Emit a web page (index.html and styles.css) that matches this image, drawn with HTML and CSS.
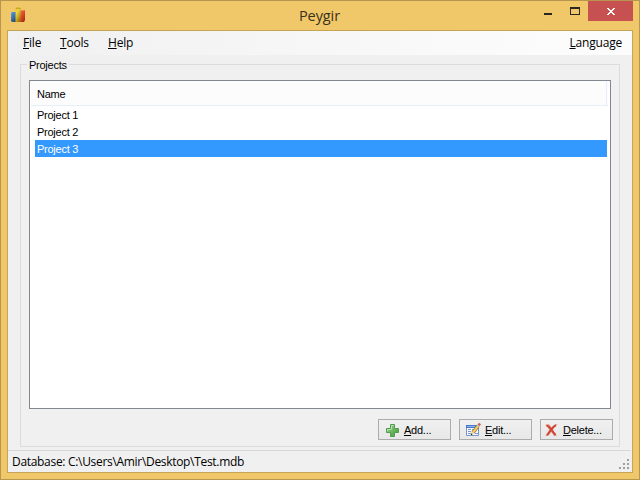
FILE: index.html
```html
<!DOCTYPE html>
<html lang="en">
<head>
<meta charset="utf-8">
<title>Peygir</title>
<link rel="stylesheet" href="styles.css">
</head>
<body>
<div class="window">
  <header class="titlebar">
    <svg class="app-icon" width="16" height="16" viewBox="0 0 16 16">
      <defs>
        <linearGradient id="blue" x1="0" y1="0" x2=".6" y2="1"><stop offset="0" stop-color="#5b9edb"/><stop offset=".4" stop-color="#4482bd"/><stop offset="1" stop-color="#254d7c"/></linearGradient>
        <linearGradient id="gold" x1="0" y1="0" x2=".7" y2="1"><stop offset="0" stop-color="#e0c02a"/><stop offset=".35" stop-color="#efd640"/><stop offset="1" stop-color="#a17100"/></linearGradient>
        <linearGradient id="red" x1="0" y1="0" x2=".7" y2="1"><stop offset="0" stop-color="#ee704d"/><stop offset=".5" stop-color="#df4a2e"/><stop offset="1" stop-color="#a92818"/></linearGradient>
      </defs>
      <path fill="url(#blue)" d="M1 6l1-1h4v10H2l-1-1z"/>
      <path fill="url(#red)" d="M10 4l1-1h4v10l-1 2h-4z"/>
      <path fill="#f08060" d="M10 4l1-1h4l-1 1z"/>
      <path fill="url(#gold)" d="M5.500 1.500l1-1H10l.8 1V14l-1 1H5.500z"/>
      <path fill="#c9a725" d="M5.500 1.500l1-1H10l.8 1-.8.500H6z"/>
    </svg>
    <h1 class="title">Peygir</h1>
    <div class="controls">
      <svg class="minimize" width="8" height="8"><path fill="#2b2620" d="M0 0h8v2H0z"/></svg>
      <svg class="maximize" width="10" height="8" shape-rendering="crispEdges"><path fill="#2b2620" fill-rule="evenodd" d="M0 0h10v8H0zM1 2h8v5H1z"/></svg>
      <div class="close"><svg width="8" height="7" shape-rendering="crispEdges"><path fill="#fff" d="M0 0h2v1h1v1h2V1h1V0h2v1H7v1H6v1H5v1h1v1h1v1h1v1H6V6H5V5H3v1H2v1H0V6h1V5h1V4h1V3H2V2H1V1H0z"/></svg></div>
    </div>
  </header>
  <main class="client">
    <nav class="menu">
      <span class="file"><u>F</u>ile</span>
      <span class="tools"><u>T</u>ools</span>
      <span class="help"><u>H</u>elp</span>
      <span class="language"><u>L</u>anguage</span>
    </nav>
    <section class="group">
      <h2 class="legend"><span>Projects</span></h2>
      <div class="list">
        <div class="list-head">Name</div>
        <div class="row">Project 1</div>
        <div class="row">Project 2</div>
        <div class="row selected">Project 3</div>
      </div>
      <div class="buttons">
        <div class="button">
          <svg width="16" height="16" viewBox="0 0 16 16"><defs><linearGradient id="green" x1="0" y1="0" x2="1" y2="1"><stop offset="0" stop-color="#9bd68b"/><stop offset="1" stop-color="#3f9a37"/></linearGradient></defs><path fill="url(#green)" stroke="#559a50" d="M6.500 2.500h4v4h4v4h-4v4h-4v-4h-4v-4h4z"/><path fill="none" stroke="#b4e2a6" d="M7.500 7V3.500h2M3.500 9.500v-2h4"/></svg>
          <span><u>A</u>dd...</span>
        </div>
        <div class="button">
          <svg width="16" height="16" viewBox="0 0 16 16"><path fill="#f4f8ff" stroke="#7894c8" d="M1.500 3.500h12v10h-12z"/><path fill="#4478d0" d="M1 3h12v3H1z"/><path fill="#98b4e4" d="M2 4h8v1H2z"/><path stroke="#7d9bd1" d="M3 7.500h3M7 7.500h2M3 9.500h3M3 11.500h3M10 11.500h3"/><path stroke="#936321" stroke-width="3.600" d="M8 10.500l5-6.500"/><path stroke="#f3cf62" stroke-width="2.200" d="M8 10.500l5-6.500"/><path fill="#efd8aa" d="M6.500 9.400L9.500 11.700 6 13z"/><path fill="#222" d="M6.400 11.300l1.100 1.100L5.700 13.300z"/><path fill="#d65d50" d="M12.500 2.500L14 .8l2 1.400-1.400 2z"/><path fill="#b9bcc4" d="M11.700 3.500l.8-1L14.700 4l-.8 1.200z"/></svg>
          <span><u>E</u>dit...</span>
        </div>
        <div class="button delete">
          <svg width="16" height="16" viewBox="0 0 16 16"><path fill="#e9a092" d="M1 3l4-1c1 1 2 3 3 4 1-2 3-4 6-4-2 1-4 4-5 6 1 2 2 4 4 6h-3C9 12 8 11 7 10c-1 2-2 3-3 4H1c2-2 3-4 4-6C4 6 3 4 1 3z"/><path fill="none" stroke="#cf4535" stroke-width="2" d="M2.500 3.500C6 4 7 8 11.500 13M12 3.200C8 5 6.500 9.500 3 13"/></svg>
          <span><u>D</u>elete...</span>
        </div>
      </div>
    </section>
    <footer class="status">
      <span class="path">Database: C:\Users\Amir\Desktop\Test.mdb</span>
      <svg class="grip" width="11" height="11" shape-rendering="crispEdges"><path fill="#a0a0a0" d="M8 0h2v2H8zM4 4h2v2H4zM8 4h2v2H8zM0 8h2v2H0zM4 8h2v2H4zM8 8h2v2H8z"/></svg>
    </footer>
  </main>
</div>
</body>
</html>
```
FILE: styles.css
```css
* { box-sizing: border-box; }
body { margin: 0; color: #000; }
u { text-decoration: underline; text-decoration-thickness: 1px; text-underline-offset: 1px; text-decoration-skip-ink: none; }
.window {
  width: 640px; height: 480px;
  display: flex; flex-direction: column;
  background: #f0c869;
  border: 1px solid #b7974f;
  padding: 0 6px 6px;
}
.titlebar { height: 29px; display: grid; grid-template-columns: 105px 1fr 106px; }
.app-icon { margin: 6px 0 0 3px; }
.title {
  margin: 3px 0 0; text-align: center;
  font: 400 14.5px/24px "Open Sans", sans-serif; color: #3a3020;
  letter-spacing: -.1px;
}
.controls { display: flex; align-items: flex-start; justify-content: flex-end; }
.minimize { margin: 12px 18px 0 0; flex: none; }
.maximize { margin: 6px 8px 0 0; flex: none; }
.close { width: 45px; height: 20px; flex: none; background: #c75050; display: flex; justify-content: center; padding-top: 7px; }
.client {
  flex: 1; display: flex; flex-direction: column;
  border: 1px solid #c5a456; background: #f0f0f0;
}
.menu {
  height: 24px; display: flex; align-items: center;
  padding: 0 10px 0 15px;
  font: 12px/16px "Open Sans", sans-serif;
  letter-spacing: -.2px;
  background: linear-gradient(90deg, #f0f0f0, #fcfcfc 90%);
}
.file { width: 37px; }
.tools { width: 48px; }
.language { margin-left: auto; }
.group {
  margin: 9px 12px 0; height: 383px;
  border: 1px solid #dcdcdc; padding: 0 7px 0 8px;
  font: 11px/13px "Liberation Sans", sans-serif;
  letter-spacing: -.25px;
}
.legend { margin: -7px 0 0 -2px; height: 13px; font: inherit; }
.legend span { display: inline-block; height: 14px; line-height: 15px; background: #f0f0f0; padding: 0 2px; }
.list { width: 582px; height: 329px; margin-top: 9px; border: 1px solid #828790; background: #fff; padding: 0 3px 0 5px; }
.list-head {
  height: 25px; margin: 0 -1px 0 -4px; padding: 7px 0 0 6px;
  border-bottom: 1px solid #e6eff9;
  background: linear-gradient(#e6eff9, #e6eff9) right 1px top 0 / 1px 100% no-repeat, #fcfcfc;
}
.row { height: 17px; padding: 3px 2px 0; }
.selected { background: #39f; color: #fff; }
.buttons { display: flex; justify-content: flex-end; gap: 8px; margin-top: 10px; margin-right: -1px; }
.button { width: 73px; height: 21px; border: 1px solid #acacac; background: linear-gradient(#f0f0f0, #e8e8e8); padding: 2px 0 0 5px; display: flex; gap: 4px; }
.delete { padding-left: 3px; gap: 3px; }
.button svg { flex: none; }
.button span { padding-top: 2px; }
.status {
  flex: 1; margin: 3px 1px 0 0; border-top: 1px solid #d7d7d7;
  display: flex; justify-content: space-between;
  font: 12px/16px "Open Sans", sans-serif; padding: 3px 1px 0 4px;
}
.path { letter-spacing: -.31px; }
.grip { margin-top: 5px; }
```
